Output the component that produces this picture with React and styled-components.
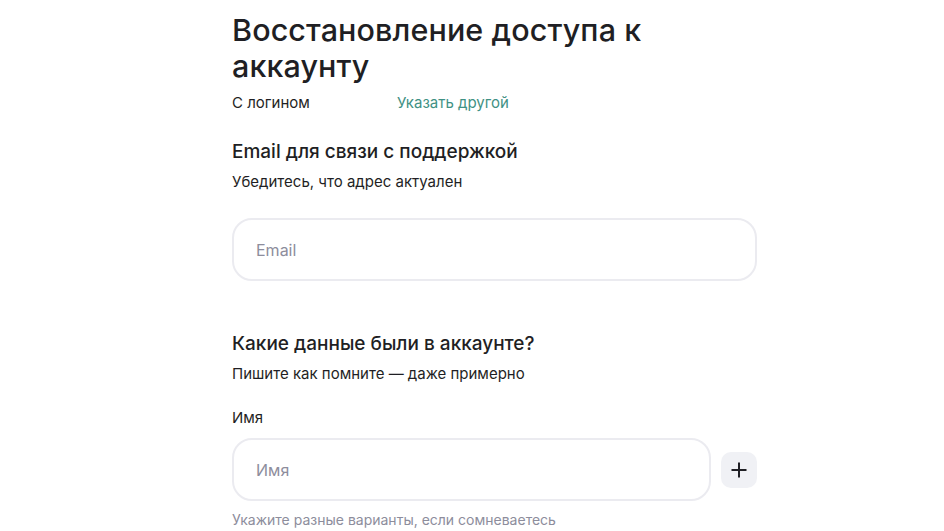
import React from "react";
import styled, { createGlobalStyle } from "styled-components";

const GlobalStyle = createGlobalStyle`
  body {
    margin: 0;
    background: #fff;
    font-family: Inter, "Noto Sans", Arial, sans-serif;
    color: #1f1f24;
  }
`;

const Page = styled.div`
  padding: 12px 0 0 232px;
`;

const Form = styled.div`
  width: 525px;
  display: flex;
  flex-direction: column;
`;

const Title = styled.h1`
  margin: 0;
  font-size: 30.5px;
  line-height: 36px;
  font-weight: 500;
  letter-spacing: 0.1px;
`;

const LoginRow = styled.div`
  display: flex;
  margin-top: 9px;
  font-size: 15px;
  line-height: 20px;
`;

const LoginLabel = styled.span`
  width: 165px;
`;

const LinkText = styled.a`
  color: #3f9184;
  text-decoration: none;
  cursor: pointer;
`;

const Section = styled.section`
  margin-top: ${(p) => p.$top}px;
`;

const SectionTitle = styled.h2`
  margin: 0;
  font-size: 19px;
  line-height: 24px;
  font-weight: 500;
`;

const Hint = styled.p`
  margin: 8px 0 0;
  font-size: 15px;
  line-height: 20px;
`;

const FieldLabel = styled.div`
  margin-top: 24px;
  font-size: 15px;
  line-height: 20px;
`;

const FieldRow = styled.div`
  display: flex;
  align-items: center;
  gap: 10px;
  margin-top: ${(p) => p.$top}px;
`;

const Input = styled.input`
  flex: 1;
  height: 63px;
  box-sizing: border-box;
  border: 2px solid #ebebf0;
  border-radius: 20px;
  padding: 0 22px;
  font-family: inherit;
  font-size: 16px;
  color: #1f1f24;
  outline: none;
  &::placeholder {
    color: #8d8d9c;
  }
`;

const AddButton = styled.button`
  width: 36px;
  height: 36px;
  border: none;
  border-radius: 10px;
  background: #f0f1f5;
  display: flex;
  align-items: center;
  justify-content: center;
  padding: 0;
  cursor: pointer;
`;

const Note = styled.div`
  margin-top: 10px;
  font-size: 14px;
  line-height: 18px;
  color: #8d8d9c;
`;

export default function App() {
  return (
    <Page>
      <GlobalStyle />
      <Form>
        <Title>
          Восстановление доступа к
          <br />
          аккаунту
        </Title>
        <LoginRow>
          <LoginLabel>С логином</LoginLabel>
          <LinkText>Указать другой</LinkText>
        </LoginRow>

        <Section $top={27}>
          <SectionTitle>Email для связи с поддержкой</SectionTitle>
          <Hint>Убедитесь, что адрес актуален</Hint>
          <FieldRow $top={26}>
            <Input placeholder="Email" />
          </FieldRow>
        </Section>

        <Section $top={51}>
          <SectionTitle>Какие данные были в аккаунте?</SectionTitle>
          <Hint>Пишите как помните — даже примерно</Hint>
          <FieldLabel>Имя</FieldLabel>
          <FieldRow $top={10}>
            <Input placeholder="Имя" />
            <AddButton aria-label="Добавить">
              <svg width="18" height="18" viewBox="0 0 18 18">
                <path d="M9 1.5v15M1.5 9h15" stroke="#1f1f24" strokeWidth="2" />
              </svg>
            </AddButton>
          </FieldRow>
          <Note>Укажите разные варианты, если сомневаетесь</Note>
        </Section>
      </Form>
    </Page>
  );
}
